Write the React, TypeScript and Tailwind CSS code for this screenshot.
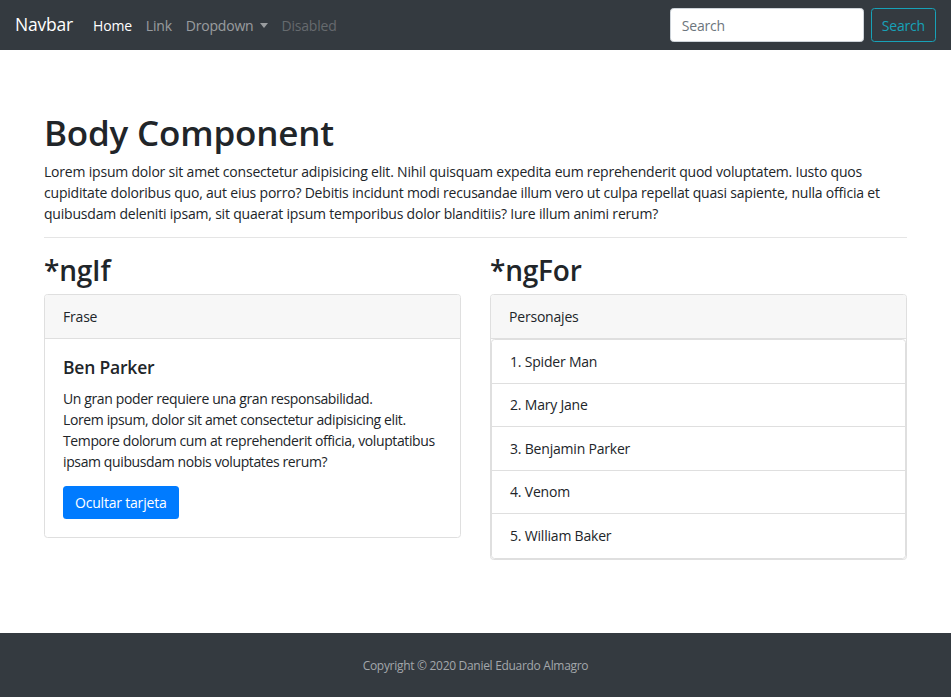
import React from 'react';

const personajes = ['Spider Man', 'Mary Jane', 'Benjamin Parker', 'Venom', 'William Baker'];

function Navbar() {
  return (
    <nav className="h-[50px] bg-[#343a40] flex items-center pl-[15px] pr-[15px]">
      <a className="text-white text-[17.5px] mr-[13px] leading-none">Navbar</a>
      <ul className="flex items-center text-[14px]">
        <li className="px-[7px] text-white">Home</li>
        <li className="px-[7px] text-white/50">Link</li>
        <li className="px-[7px] text-white/50 flex items-center">
          Dropdown
          <span className="ml-[6px] inline-block w-0 h-0 border-l-[4.5px] border-r-[4.5px] border-t-[5px] border-l-transparent border-r-transparent border-t-white/50"></span>
        </li>
        <li className="px-[7px] text-white/25">Disabled</li>
      </ul>
      <form className="ml-auto flex items-center">
        <input
          className="w-[194px] h-[34px] rounded-[3.5px] bg-white border border-[#ced4da] px-[11px] text-[14px] text-[#495057] placeholder:text-[#6c757d] mr-[7px] outline-none"
          placeholder="Search"
        />
        <button className="h-[34px] px-[10px] rounded-[3.5px] border border-[#17a2b8] text-[#17a2b8] text-[14px]">
          Search
        </button>
      </form>
    </nav>
  );
}

function Card({ header, children }: { header: string; children: React.ReactNode }) {
  return (
    <div className="border border-[#dfdfdf] rounded-[3.5px] overflow-hidden">
      <div className="bg-[#f7f7f7] border-b border-[#dfdfdf] px-[18px] py-[11px] leading-[21px] text-[14px]">
        {header}
      </div>
      {children}
    </div>
  );
}

export default function App() {
  return (
    <div
      className="min-h-screen flex flex-col bg-white text-[#212529] text-[14px] leading-[21px] tracking-[-0.2px]"
      style={{ fontFamily: '"Open Sans", "Noto Sans", sans-serif' }}
    >
      <Navbar />
      <main className="w-[863px] mx-auto pt-[62px]">
        <h1 className="text-[35px] leading-[42px] font-semibold mb-[7px]">Body Component</h1>
        <p>
          Lorem ipsum dolor sit amet consectetur adipisicing elit. Nihil quisquam expedita eum reprehenderit quod
          voluptatem. Iusto quos cupiditate doloribus quo, aut eius porro? Debitis incidunt modi recusandae illum vero
          ut culpa repellat quasi sapiente, nulla officia et quibusdam deleniti ipsam, sit quaerat ipsum temporibus
          dolor blanditiis? Iure illum animi rerum?
        </p>
        <hr className="border-t border-[#e5e5e5] mt-[13px] mb-[15px]" />
        <div className="grid grid-cols-2 gap-[29px]">
          <div>
            <h2 className="text-[28px] leading-[34px] font-semibold mb-[7px]">*ngIf</h2>
            <Card header="Frase">
              <div className="p-[18px]">
                <h5 className="text-[17.5px] leading-[21px] font-semibold mb-[10px]">Ben Parker</h5>
                <p className="mb-[14px] tracking-[-0.38px]">
                  Un gran poder requiere una gran responsabilidad.
                  <br />
                  Lorem ipsum, dolor sit amet consectetur adipisicing elit. Tempore dolorum cum at reprehenderit
                  officia, voluptatibus ipsam quibusdam nobis voluptates rerum?
                </p>
                <button className="h-[33px] px-[12px] rounded-[3.5px] bg-[#007bff] text-white text-[14px]">
                  Ocultar tarjeta
                </button>
              </div>
            </Card>
          </div>
          <div>
            <h2 className="text-[28px] leading-[34px] font-semibold mb-[7px]">*ngFor</h2>
            <Card header="Personajes">
              <ul className="border border-[#dfdfdf] rounded-[3.5px]">
                {personajes.map((p, i) => (
                  <li
                    key={p}
                    className="h-[43.5px] flex items-center px-[18px] border-b border-[#dfdfdf] last:border-b-0"
                  >
                    {i + 1}. {p}
                  </li>
                ))}
              </ul>
            </Card>
          </div>
        </div>
      </main>
      <footer className="mt-auto h-[64px] bg-[#343a40] flex items-center justify-center text-[12px] tracking-[-0.3px] text-[#a3a7ab]">
        Copyright © 2020 Daniel Eduardo Almagro
      </footer>
    </div>
  );
}
